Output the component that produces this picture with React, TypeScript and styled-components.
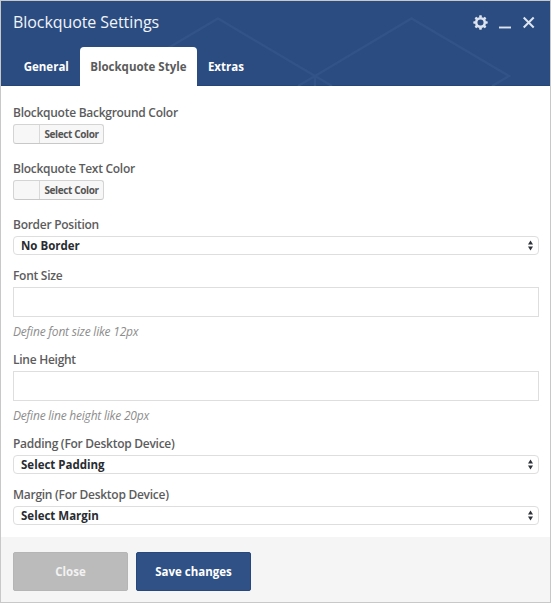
import React, { useState } from 'react';
import styled, { createGlobalStyle } from 'styled-components';

const GlobalStyle = createGlobalStyle`
  *, *::before, *::after { box-sizing: border-box; }
  body { margin: 0; background: #fff; font-family: "Open Sans", "Noto Sans", sans-serif; }
  button, input { font-family: inherit; }
`;

const Dialog = styled.div`
  width: 551px;
  height: 603px;
  display: flex;
  flex-direction: column;
  border: 1px solid #c8c8c8;
  background: #fff;
  overflow: hidden;
`;

const Header = styled.header`
  position: relative;
  flex: none;
  height: 85px;
  display: flex;
  flex-direction: column;
  justify-content: space-between;
  background: #2b4c80;
  border-bottom: 1px solid #254477;
`;

const Pattern = styled.svg`
  position: absolute;
  inset: 0;
  pointer-events: none;
`;

const TitleBar = styled.div`
  position: relative;
  display: flex;
  align-items: center;
  justify-content: space-between;
  height: 42px;
  padding: 0 14.5px 0 12px;
`;

const Title = styled.h1`
  margin: 0;
  font-size: 16px;
  font-weight: 400;
  line-height: 22px;
  letter-spacing: -0.07px;
  color: #f1f4f9;
`;

const WindowActions = styled.div`
  display: flex;
  gap: 11px;
  padding-top: 1px;
`;

const IconButton = styled.button`
  display: flex;
  padding: 0;
  border: 0;
  background: none;
  color: #dde4ef;
`;

const Tabs = styled.nav`
  position: relative;
  display: flex;
  height: 39px;
  margin: 0 0 -1px 12px;
`;

const Tab = styled.button<{ $active: boolean }>`
  padding: 0 10.7px;
  border: 0;
  border-radius: 4px 4px 0 0;
  background: ${(p) => (p.$active ? '#fff' : 'transparent')};
  color: ${(p) => (p.$active ? '#5b5b5b' : '#fff')};
  font-size: 11.5px;
  font-weight: 700;
  white-space: nowrap;
`;

const Form = styled.main`
  flex: 1;
  padding: 18px 11px 0 12px;
`;

const Field = styled.div<{ $gap: number }>`
  display: flex;
  flex-direction: column;
  align-items: flex-start;
  margin-bottom: ${(p) => p.$gap}px;
`;

const Label = styled.label`
  height: 16px;
  margin-bottom: 4px;
  font-size: 12px;
  font-weight: 600;
  line-height: 18px;
  letter-spacing: -0.27px;
  color: #5c5c5c;
`;

const ColorButton = styled.button`
  display: flex;
  width: 91px;
  height: 20px;
  padding: 0;
  border: 1px solid #d4d4d4;
  border-bottom-color: #c8c8c8;
  border-radius: 3px;
  background: #f7f7f7;
  color: #555;
  font-size: 10px;
  font-weight: 700;
  line-height: 18px;
  letter-spacing: -0.38px;
`;

const Swatch = styled.span`
  width: 26px;
  height: 18px;
  border-right: 1px solid #d9d9d9;
`;

const ColorText = styled.span`
  flex: 1;
  text-align: center;
  white-space: nowrap;
`;

const SelectBox = styled.button`
  display: flex;
  align-items: center;
  justify-content: space-between;
  width: 100%;
  height: 19px;
  padding: 0 5px 0 7px;
  border: 1px solid #dedede;
  border-radius: 4px;
  background: #fff;
  color: #292c30;
  font-size: 11.5px;
  font-weight: 700;
  line-height: 17px;
`;

const TextInput = styled.input`
  width: 100%;
  height: 30px;
  padding: 0 8px;
  border: 1px solid #dedede;
  border-radius: 0;
  background: #fff;
  outline: none;
`;

const Hint = styled.p`
  height: 16px;
  margin: 6px 0 0;
  font-size: 12px;
  font-style: italic;
  line-height: 18px;
  letter-spacing: -0.21px;
  color: #8d8d8d;
`;

const Footer = styled.footer`
  flex: none;
  display: flex;
  gap: 8px;
  height: 65px;
  padding: 15px 12px 0;
  background: #f5f5f5;
`;

const FooterButton = styled.button<{ $primary?: boolean }>`
  width: 115px;
  height: 39px;
  padding: 0;
  border: 1px solid ${(p) => (p.$primary ? '#28487d' : '#b5b5b5')};
  border-radius: 2px;
  background: ${(p) => (p.$primary ? '#2f5186' : '#bbb')};
  color: ${(p) => (p.$primary ? '#fff' : '#f2f2f2')};
  font-size: 11.5px;
  font-weight: 700;
`;

function HeaderPattern() {
  return (
    <Pattern width="549" height="85" viewBox="1 1 549 85" fill="none" stroke="#315388" strokeWidth="2.4">
      <path d="M121 76 218 18.500 315 76 332 86M298 86 315 76 411.500 18.500 509 76 492 86M315 76V86" />
    </Pattern>
  );
}

function GearIcon() {
  return (
    <svg width="15" height="15" viewBox="-7.500 -7.500 15 15">
      <circle r="4.300" fill="none" stroke="currentColor" strokeWidth="2.500" />
      {[0, 45, 90, 135, 180, 225, 270, 315].map((angle) => (
        <path key={angle} transform={`rotate(${angle})`} d="M-1.500 -5 -1.100 -7.200H1.100L1.500 -5Z" fill="currentColor" />
      ))}
    </svg>
  );
}

function MinimizeIcon() {
  return (
    <svg width="12" height="15" viewBox="0 0 12 15">
      <path d="M0 12.500H12" stroke="currentColor" strokeWidth="1.900" />
    </svg>
  );
}

function CloseIcon() {
  return (
    <svg width="14" height="15" viewBox="0 0 14 15">
      <path d="M1.700 2.500 11.700 12.500M11.700 2.500 1.700 12.500" stroke="currentColor" strokeWidth="2" />
    </svg>
  );
}

function SelectArrows() {
  return (
    <svg width="5" height="11" viewBox="0 0 5 11" fill="#2d3138">
      <path d="M2.500 .500 5 4.500H0ZM2.500 10.500 5 6.500H0Z" />
    </svg>
  );
}

function ColorField({ label }: { label: string }) {
  return (
    <Field $gap={16}>
      <Label>{label}</Label>
      <ColorButton type="button">
        <Swatch />
        <ColorText>Select Color</ColorText>
      </ColorButton>
    </Field>
  );
}

function SelectField({ label, value }: { label: string; value: string }) {
  return (
    <Field $gap={12}>
      <Label>{label}</Label>
      <SelectBox type="button">
        {value}
        <SelectArrows />
      </SelectBox>
    </Field>
  );
}

function TextField({ label, hint }: { label: string; hint: string }) {
  return (
    <Field $gap={12}>
      <Label>{label}</Label>
      <TextInput aria-label={label} />
      <Hint>{hint}</Hint>
    </Field>
  );
}

const tabs = ['General', 'Blockquote Style', 'Extras'];

export default function App() {
  const [active, setActive] = useState('Blockquote Style');
  return (
    <>
      <GlobalStyle />
      <Dialog>
        <Header>
          <HeaderPattern />
          <TitleBar>
            <Title>Blockquote Settings</Title>
            <WindowActions>
              <IconButton aria-label="Settings"><GearIcon /></IconButton>
              <IconButton aria-label="Minimize"><MinimizeIcon /></IconButton>
              <IconButton aria-label="Close window"><CloseIcon /></IconButton>
            </WindowActions>
          </TitleBar>
          <Tabs>
            {tabs.map((tab) => (
              <Tab key={tab} $active={tab === active} onClick={() => setActive(tab)}>{tab}</Tab>
            ))}
          </Tabs>
        </Header>
        <Form>
          <ColorField label="Blockquote Background Color" />
          <ColorField label="Blockquote Text Color" />
          <SelectField label="Border Position" value="No Border" />
          <TextField label="Font Size" hint="Define font size like 12px" />
          <TextField label="Line Height" hint="Define line height like 20px" />
          <SelectField label="Padding (For Desktop Device)" value="Select Padding" />
          <SelectField label="Margin (For Desktop Device)" value="Select Margin" />
        </Form>
        <Footer>
          <FooterButton>Close</FooterButton>
          <FooterButton $primary>Save changes</FooterButton>
        </Footer>
      </Dialog>
    </>
  );
}
